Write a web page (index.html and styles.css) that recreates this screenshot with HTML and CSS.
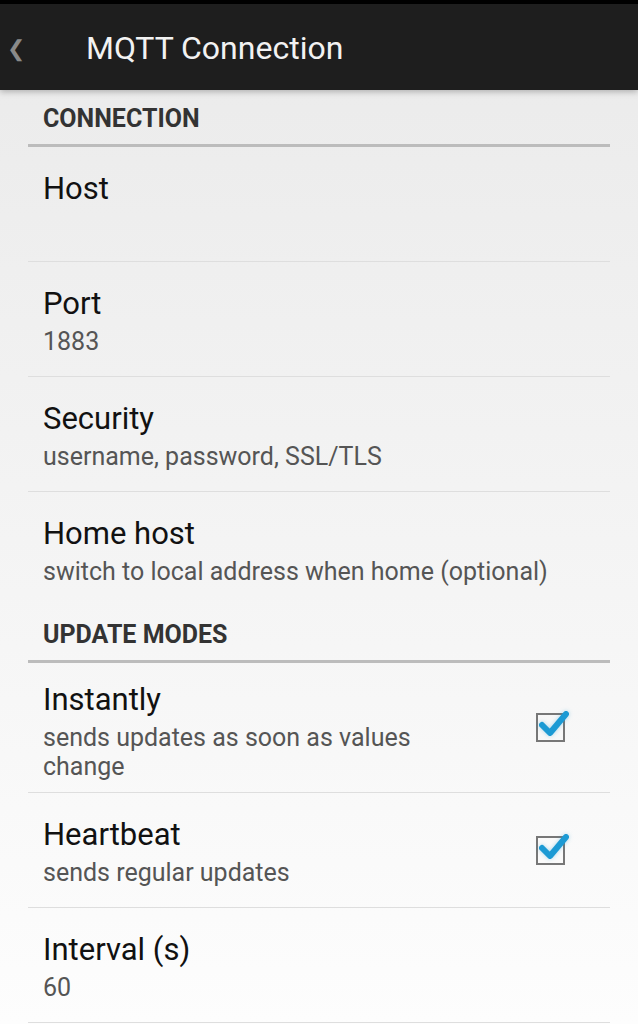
FILE: index.html
```html
<!DOCTYPE html>
<html lang="en">

<head>
    <meta charset="UTF-8">
    <meta name="viewport" content="width=device-width, initial-scale=1.0">
    <title>MQTT Connection</title>

    <link rel="stylesheet" href="styles.css">

</head>

<body>
    <div class="status"></div>
    <header class="toolbar">
        <span class="back">&#10094;</span>
        <h1>MQTT Connection</h1>
    </header>

    <main class="prefs">
        <h2 class="category">CONNECTION</h2>

        <div class="item">
            <div class="text">
                <div class="title">Host</div>
                <div class="summary"></div>
            </div>
        </div>

        <div class="item">
            <div class="text">
                <div class="title">Port</div>
                <div class="summary">1883</div>
            </div>
        </div>

        <div class="item">
            <div class="text">
                <div class="title">Security</div>
                <div class="summary">username, password, SSL/TLS</div>
            </div>
        </div>

        <div class="item last">
            <div class="text">
                <div class="title">Home host</div>
                <div class="summary">switch to local address when home (optional)</div>
            </div>
        </div>

        <h2 class="category">UPDATE MODES</h2>

        <div class="item tall">
            <div class="text">
                <div class="title">Instantly</div>
                <div class="summary">sends updates as soon as values change</div>
            </div>
            <div class="widget">
                <span class="check">
                    <svg viewBox="0 0 36 40" width="36" height="40">
                        <path d="M6 20 L14 28 L30 9" fill="none" stroke="#1c9ad4" stroke-width="6" stroke-linecap="round" stroke-linejoin="round"/>
                    </svg>
                </span>
            </div>
        </div>

        <div class="item">
            <div class="text">
                <div class="title">Heartbeat</div>
                <div class="summary">sends regular updates</div>
            </div>
            <div class="widget">
                <span class="check">
                    <svg viewBox="0 0 36 40" width="36" height="40">
                        <path d="M6 20 L14 28 L30 9" fill="none" stroke="#1c9ad4" stroke-width="6" stroke-linecap="round" stroke-linejoin="round"/>
                    </svg>
                </span>
            </div>
        </div>

        <div class="item">
            <div class="text">
                <div class="title">Interval (s)</div>
                <div class="summary">60</div>
            </div>
        </div>
    </main>
</body>

</html>
```

FILE: styles.css
```css
body {
    margin: 0;
    min-height: 1024px;
    background: linear-gradient(#eaeaea, #fdfdfd);
    font-family: Roboto, 'Noto Sans', sans-serif;
    color: #111;
}

.status {
    height: 4px;
    background-color: #000;
}

.toolbar {
    display: flex;
    align-items: center;
    height: 86px;
    padding-top: 2px;
    box-sizing: border-box;
    background-color: #1e1e1e;
    box-shadow: 0 2px 6px rgba(0, 0, 0, 0.25);
}

.back {
    width: 86px;
    padding-left: 7px;
    box-sizing: border-box;
    color: #8a8a8a;
    font-size: 22px;
}

.toolbar h1 {
    margin: 0;
    color: #f2f2f2;
    font-size: 32px;
    font-weight: normal;
}

.prefs {
    padding: 0 28px;
}

.category {
    margin: 0;
    padding: 3px 15px 0;
    display: flex;
    align-items: center;
    box-sizing: border-box;
    height: 57px;
    border-bottom: 3px solid #bcbcbc;
    font-size: 25px;
    font-weight: bold;
    color: #333;
}

.item {
    display: flex;
    align-items: center;
    min-height: 114px;
    padding: 0 0 0 15px;
    border-bottom: 1px solid #dedede;
}

.item.last {
    border-bottom: none;
}

.text {
    flex: 1;
    align-self: flex-start;
    padding: 24px 0 6px;
}

.item.tall .text {
    padding: 19px 0 11px;
}

.title {
    font-size: 31px;
    line-height: 36px;
}

.summary {
    font-size: 25px;
    line-height: 29px;
    color: #555;
    padding-top: 5px;
}

.widget {
    width: 120px;
    display: flex;
    justify-content: center;
}

.check {
    position: relative;
    width: 25px;
    height: 25px;
    border: 2px solid #777;
}

.check svg {
    position: absolute;
    left: -2px;
    top: -10px;
    filter: drop-shadow(0 0 2px rgba(28, 154, 212, 0.35));
}
```
